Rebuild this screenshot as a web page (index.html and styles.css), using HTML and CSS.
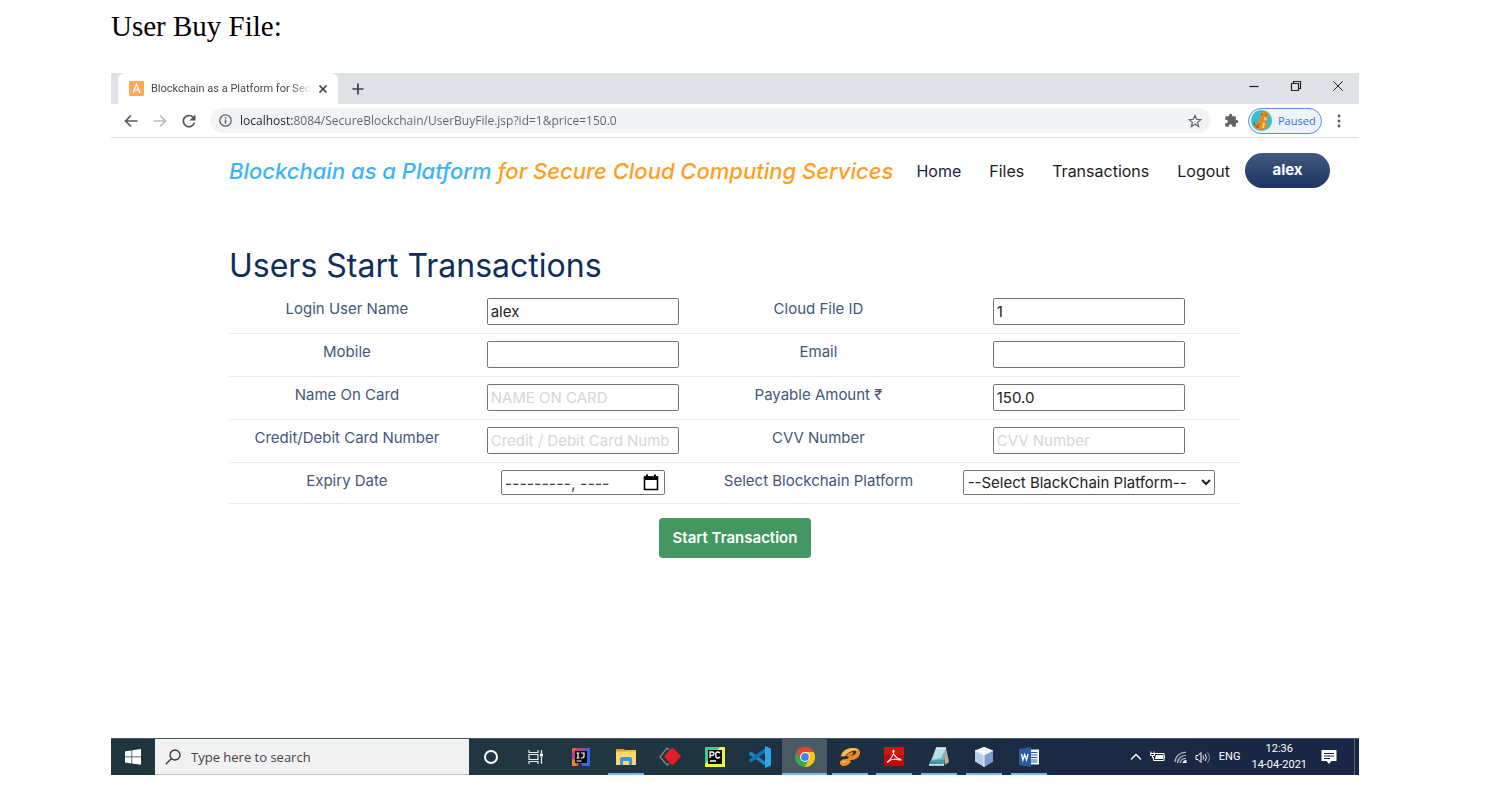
FILE: index.html
```html
<!DOCTYPE html>
<html lang="en">
<head>
<meta charset="utf-8">
<title>User Buy File</title>
<link rel="stylesheet" href="styles.css">
</head>
<body>
<h1 class="caption">User Buy File:</h1>
<div class="screen">
  <div class="tabstrip">
    <div class="tab">
      <svg class="favicon" viewBox="0 0 15 15" aria-hidden="true"><rect width="15" height="15" rx="1" fill="#fda95b"/><path d="M4 12 7.500 3.200 11 12M5.300 9h4.400" fill="none" stroke="#fff" stroke-width="1.200"/></svg>
      <span class="tab-title">Blockchain as a Platform for Secu</span>
      <button class="icon-btn" aria-label="Close tab"><svg width="10" height="10" viewBox="0 0 10 10"><path d="M1.500 1.500l7 7m0-7l-7 7" stroke="#3c4043" stroke-width="1.700"/></svg></button>
    </div>
    <button class="icon-btn new-tab" aria-label="New tab"><svg width="12" height="12" viewBox="0 0 12 12"><path d="M6 .5v11M.5 6h11" stroke="#3c4043" stroke-width="1.700"/></svg></button>
    <div class="window-controls">
      <button class="icon-btn" aria-label="Minimize"><svg width="12" height="12" viewBox="0 0 12 12"><path d="M1.500 6.500h9" stroke="#222" stroke-width="1.200"/></svg></button>
      <button class="icon-btn" aria-label="Restore"><svg width="12" height="12" viewBox="0 0 12 12"><path d="M1.500 3.500h7v7h-7zM3.500 3.500v-2h7v7h-2" fill="none" stroke="#222" stroke-width="1.200"/></svg></button>
      <button class="icon-btn" aria-label="Close"><svg width="12" height="12" viewBox="0 0 12 12"><path d="M1.300 1.300l9.400 9.400m0-9.400l-9.400 9.400" stroke="#222"/></svg></button>
    </div>
  </div>

  <div class="toolbar">
    <div class="history">
      <button class="icon-btn" aria-label="Back"><svg width="14" height="14" viewBox="0 0 14 14"><path d="M13.500 7H1.500M7 1.500 1.500 7 7 12.500" fill="none" stroke="#55595e" stroke-width="1.700"/></svg></button>
      <button class="icon-btn" aria-label="Forward"><svg width="14" height="14" viewBox="0 0 14 14"><path d="M.5 7h12M7 1.500 12.500 7 7 12.500" fill="none" stroke="#b9bbbe" stroke-width="1.700"/></svg></button>
      <button class="icon-btn" aria-label="Reload"><svg width="14" height="14" viewBox="0 0 14 14"><path d="M12.400 8.600A5.600 5.600 0 1 1 11 3.200" fill="none" stroke="#4f5358" stroke-width="1.700"/><path d="M13.500.5v6h-6z" fill="#4f5358"/></svg></button>
    </div>
    <div class="address">
      <svg width="13" height="13" viewBox="0 0 13 13" aria-hidden="true"><circle cx="6.500" cy="6.500" r="5.700" fill="none" stroke="#5f6368" stroke-width="1.300"/><path d="M6.500 5.500v4.300M6.500 3v1.500" stroke="#5f6368" stroke-width="1.500"/></svg>
      <input class="url" type="text" aria-label="Address" value="localhost:8084/SecureBlockchain/UserBuyFile.jsp?id=1&amp;price=150.0">
      <button class="icon-btn" aria-label="Bookmark"><svg width="14" height="14" viewBox="0 0 14 14"><path d="M7 1.500l1.600 3.800 4.200.4-3.200 2.700 1 4.100L7 10.300l-3.600 2.200 1-4.100-3.200-2.700 4.200-.4z" fill="none" stroke="#5f6368" stroke-width="1.200"/></svg></button>
    </div>
    <button class="icon-btn extensions" aria-label="Extensions"><svg width="15" height="15" viewBox="0 0 24 24"><path fill="#5f6368" d="M20.500 11H19V7a2 2 0 0 0-2-2h-4V3.500a2.500 2.500 0 0 0-5 0V5H4a2 2 0 0 0-2 2v3.800h1.500a2.700 2.700 0 0 1 0 5.400H2V20a2 2 0 0 0 2 2h3.800v-1.500a2.700 2.700 0 0 1 5.400 0V22H17a2 2 0 0 0 2-2v-4h1.500a2.500 2.500 0 0 0 0-5z"/></svg></button>
    <button class="profile">
      <svg width="21" height="21" viewBox="0 0 21 21" aria-hidden="true"><circle cx="10.500" cy="10.500" r="10.500" fill="#35bdd0"/><path d="M10 3q1-2 5-1 3 1 3 4l-2 3-2 1 3 4-1 4-4 2-6-1q-4-2-3-5l3 1q-1-4 4-6l-1-3z" fill="#e58a22"/><path d="M13 7l3 1-1 3-2-1zM12 12l2 1-1 5h-2z" fill="#f8cf79"/><path d="M3 12q0 4 3 5M10 4l2 1M14 5h2M8 14q-2 1-1 4" fill="none" stroke="#8c4318"/></svg>
      <span>Paused</span>
    </button>
    <button class="icon-btn menu" aria-label="Menu"><svg width="4" height="14" viewBox="0 0 4 14"><g fill="#55595e"><circle cx="2" cy="2" r="1.400"/><circle cx="2" cy="7" r="1.400"/><circle cx="2" cy="12" r="1.400"/></g></svg></button>
  </div>

  <div class="site">
    <header class="site-header">
      <a class="brand" href="#">Blockchain as a Platform <span class="brand-accent">for Secure Cloud Computing Services</span></a>
      <nav class="nav">
        <a class="current" href="#">Home</a>
        <a href="#">Files</a>
        <a href="#">Transactions</a>
        <a href="#">Logout</a>
        <a class="user-pill" href="#">alex</a>
      </nav>
    </header>
    <main class="content">
      <h2 class="title">Users Start Transactions</h2>
      <form>
        <table class="form-table">
          <colgroup><col class="col"><col class="col"><col class="col"><col class="col-wide"></colgroup>
          <tbody>
            <tr>
              <td><label for="user">Login User Name</label></td>
              <td><input class="field" id="user" type="text" value="alex"></td>
              <td><label for="file">Cloud File ID</label></td>
              <td><input class="field" id="file" type="text" value="1"></td>
            </tr>
            <tr>
              <td><label for="mobile">Mobile</label></td>
              <td><input class="field" id="mobile" type="text"></td>
              <td><label for="email">Email</label></td>
              <td><input class="field" id="email" type="email"></td>
            </tr>
            <tr>
              <td><label for="name">Name On Card</label></td>
              <td><input class="field" id="name" type="text" placeholder="NAME ON CARD"></td>
              <td><label for="amount">Payable Amount ₹</label></td>
              <td><input class="field" id="amount" type="text" value="150.0"></td>
            </tr>
            <tr>
              <td><label for="card">Credit/Debit Card Number</label></td>
              <td><input class="field" id="card" type="text" placeholder="Credit / Debit Card Numb"></td>
              <td><label for="cvv">CVV Number</label></td>
              <td><input class="field" id="cvv" type="text" placeholder="CVV Number"></td>
            </tr>
            <tr>
              <td><label for="expiry">Expiry Date</label></td>
              <td>
                <div class="month">
                  <input id="expiry" type="text" placeholder="---------, ----">
                  <button class="icon-btn" type="button" aria-label="Show month picker"><svg width="16" height="17" viewBox="0 0 16 17"><path d="M1.500 3h13v12.500h-13z" fill="none" stroke="#000" stroke-width="1.600"/><path d="M1 2.500h14V6H1zM3 .5h2v3H3zM11 .5h2v3h-2z"/></svg></button>
                </div>
              </td>
              <td><label for="platform">Select Blockchain Platform</label></td>
              <td><select class="platform" id="platform"><option>--Select BlackChain Platform--</option></select></td>
            </tr>
          </tbody>
        </table>
        <button class="submit" type="submit">Start Transaction</button>
      </form>
    </main>
  </div>

  <div class="taskbar">
    <button class="start" aria-label="Start"><svg width="16" height="16" viewBox="0 0 16 16"><path fill="#fff" d="M0 2.300l6.500-.9v6.100H0zM7.200 1.300 16 0v7.500H7.200zM0 8.300h6.500v6.100L0 13.500zM7.200 8.300H16v7.500l-8.800-1.200z"/></svg></button>
    <div class="search">
      <svg width="16" height="16" viewBox="0 0 16 16" aria-hidden="true"><circle cx="10" cy="6" r="5" fill="none" stroke="#333" stroke-width="1.300"/><path d="M6.500 9.500.8 15.200" stroke="#333" stroke-width="1.300"/></svg>
      <input type="text" aria-label="Search" placeholder="Type here to search">
    </div>
    <div class="apps">
      <button class="app" aria-label="Cortana"><svg width="20" height="20" viewBox="0 0 20 20"><circle cx="10" cy="10" r="6" fill="none" stroke="#fff" stroke-width="2"/></svg></button>
      <button class="app" aria-label="Task view"><svg width="20" height="20" viewBox="0 0 20 20"><path d="M3 3v2.500h9V3M3 17v-2.500h9V17M3 7.500h9v5H3zM15.500 3v3.500M15.500 10v7" fill="none" stroke="#e8ecee" stroke-width="1.200"/><path d="M14 6.500h3v3h-3z" fill="#fff"/></svg></button>
      <button class="app" aria-label="IntelliJ IDEA"><svg width="20" height="20" viewBox="0 0 20 20"><path d="M1 1h9L7 19H1z" fill="#f05a3c"/><path d="M6 1h13v18h-8z" fill="#3564e8"/><path d="M1 6l6-5h7L5 19H1z" fill="#c13c87"/><path d="M1 12l4 1v6H1z" fill="#f38230"/><path d="M4 4h12v12H4z" fill="#090909"/><path d="M5.500 6h3M7 6v5M5.500 11h3M10 6h3v3.500q0 1.500-2 1.500h-1M5.500 14h5" fill="none" stroke="#fff" stroke-width="1.200"/></svg></button>
      <button class="app running" aria-label="File Explorer"><svg width="20" height="20" viewBox="0 0 20 20"><path d="M0 2h8l2 2H0z" fill="#e59b1c"/><path d="M0 4h20v14H0z" fill="#ffd76a"/><path d="M0 4h9l1-1h10v2H0z" fill="#f6bd3c"/><path d="M4 18v-7l2-1h8l2 1v7h-3v-4H7v4z" fill="#3b96de"/></svg></button>
      <button class="app" aria-label="Git client"><svg width="22" height="20" viewBox="0 0 22 20"><path d="M10 2.500 8 1 1 10l7 8 2-1.500" fill="none" stroke="#87949a" stroke-width="1.200"/><path d="M13.500 1q.8 0 1.500.7l6.500 7q.7.800 0 1.600L15 17.300q-1.500 1.400-3 0l-6.500-7q-.7-.8 0-1.600L12 1.700q.7-.7 1.500-.7z" fill="#e01f28"/></svg></button>
      <button class="app" aria-label="PyCharm"><svg width="20" height="20" viewBox="0 0 20 20"><path d="M0 0h20v20H0z" fill="#f6f04a"/><path d="M0 0h15L0 17z" fill="#32d58c"/><path d="M3 3h14v14H3z" fill="#080808"/><path d="M5 11V5h2q2 0 2 1.700T7 8.500H5M15 6q-1-1-2.300-1-2 0-2 3t2 3q1.300 0 2.300-1M5 14h6" fill="none" stroke="#fff" stroke-width="1.300"/></svg></button>
      <button class="app" aria-label="Visual Studio Code"><svg width="22" height="22" viewBox="0 0 22 22"><path d="M0 7l2-1.500L18 17v4L0 8.500z" fill="#1686cb"/><path d="M0 15l2 1.500L18 5V1L0 13.500z" fill="#0877b9"/><path d="M16 0l6 2.500v17L16 22z" fill="#2aa5ee"/></svg></button>
      <button class="app running active" aria-label="Chrome"><svg width="20" height="20" viewBox="0 0 20 20"><circle cx="10" cy="10" r="10" fill="#38a853"/><path d="M1.300 5A10 10 0 0 1 18.700 5L10 5.500 5.700 12.500z" fill="#e94335"/><path d="M18.700 5A10 10 0 0 1 9.500 20l4.800-7.500L10 5z" fill="#fbc116"/><circle cx="10" cy="10" r="4.900" fill="#fff"/><circle cx="10" cy="10" r="3.900" fill="#4285e8"/></svg></button>
      <button class="app running" aria-label="Media player"><svg width="20" height="20" viewBox="0 0 20 20"><path fill-rule="evenodd" d="M1 9Q3 1 13 1q8 0 7 6-2 6-10 6l1 2q-3 4-8 4-4-1-3-4 1-3 6-3 2 0 3-2l-3-1q2-3 6-4 2 0 1 2-1 1-3 2 4 0 6-3 1-3-3-2-7 1-8 5-2 1-5 0z" fill="#f58a22"/><path d="M1 9Q4 1 13 1q4 0 6 2-6-1-12 4l-2 2zM1 15q2-2 6-1l-3 2z" fill="#ffbc55"/></svg></button>
      <button class="app running" aria-label="Adobe Reader"><svg width="20" height="20" viewBox="0 0 20 20"><path d="M0 0h20v19H0z" fill="#bd0909"/><path d="M0 0h20v8H0z" fill="#d31410"/><path d="M3 15.500q6-5 7-11.500-.5-1.500-1 0 0 4.500 5 7.500 3 .5 3 1.500-4 0-6-1-4 0-8 3.500z" fill="none" stroke="#fff" stroke-width="1.200"/></svg></button>
      <button class="app running" aria-label="Notepad"><svg width="22" height="20" viewBox="0 0 22 20"><path d="M16 1h2l3 14-4 3z" fill="#bcae8e"/><path d="M8 1h10l-2 17H1z" fill="#68b8c4"/><path d="M8 1h10l-5 10-9 2z" fill="#b5dfe3"/><path d="M1 18l1.500-4L16 13l-1 5z" fill="#3f94a5"/><path d="M1 18h15M8 1h10" stroke="#e5f4f4" stroke-width="1.500"/></svg></button>
      <button class="app running" aria-label="NetBeans"><svg width="20" height="22" viewBox="0 0 20 22"><path d="M10 1l9 3.500v11L10 21l-9-5.500v-11z" fill="#b8cced"/><path d="M10 1l9 3.500L10 9 1 4.500z" fill="#f3f6ef"/><path d="M10 9l9-4.500v11L10 21z" fill="#7d9bcf"/><path d="M10 9v12M1 4.500 10 9l9-4.500" fill="none" stroke="#eef4ff"/></svg></button>
      <button class="app running" aria-label="Word"><svg width="20" height="20" viewBox="0 0 20 20"><path d="M11 2.500h9v15h-9z" fill="#fff"/><path d="M12 5.500h6.500M12 8h6.500M12 10.500h6.500M12 13h6.500M12 15h6.500" stroke="#2b5ca8"/><path d="M0 2l12-2v20L0 18z" fill="#2b5aa6"/><path d="M2.500 7l1.400 6 1.800-5.500L7.500 13 9 7" fill="none" stroke="#fff" stroke-width="1.300"/></svg></button>
    </div>
    <div class="tray">
      <svg width="12" height="8" viewBox="0 0 12 8" aria-hidden="true"><path d="M1 6.500 6 1.500l5 5" fill="none" stroke="#fff" stroke-width="1.300"/></svg>
      <svg width="16" height="12" viewBox="0 0 16 12" aria-hidden="true"><path d="M5 2.500h9v7H3.500V6M14.500 4.500v3M1 .5v2M4 .5v2M.5 2.500h4v2h-4zM2.500 4v3" fill="none" stroke="#fff"/><path d="M6 4h7v4H5z" fill="#fff"/></svg>
      <svg width="13" height="13" viewBox="0 0 13 13" aria-hidden="true"><path d="M1 11A10 10 0 0 1 12 1.500M3.500 12A8 8 0 0 1 12 4.500M6 12a6 6 0 0 1 6-4.500" fill="none" stroke="#b9c0cd" stroke-width="1.200"/><path d="M8.500 12a4 4 0 0 1 4-3v3z" fill="#fff"/></svg>
      <svg width="16" height="13" viewBox="0 0 16 13" aria-hidden="true"><path d="M1 4.500h2L6 1.500v10l-3-3H1z" fill="none" stroke="#fff"/><path d="M8 4.500q1.500 2 0 4M10 3q3 3.500 0 7" fill="none" stroke="#fff"/><path d="M12.500 1.500q4 5 0 10" fill="none" stroke="#8993a6"/></svg>
      <span class="lang">ENG</span>
      <div class="clock"><span>12:36</span><span>14-04-2021</span></div>
      <button class="icon-btn" aria-label="Notifications"><svg width="16" height="16" viewBox="0 0 16 16"><path d="M.5 1h15v11h-5L8 15l-2.500-3h-5z" fill="#fff"/><path d="M3 4.500h10M3 7h10M3 9.500h6" stroke="#1a2745"/></svg></button>
    </div>
    <button class="show-desktop" aria-label="Show desktop"></button>
  </div>
</div>
</body>
</html>
```

FILE: styles.css
```css
* { box-sizing: border-box; }

body {
  margin: 0;
  min-height: 100vh;
  display: flex;
  flex-direction: column;
  padding: 8px 133px 32px 111px;
  background: #fff;
  font-family: "Open Sans", "Noto Sans", sans-serif;
}

button, input, select { font: inherit; color: inherit; }
a { color: inherit; text-decoration: none; }
svg { display: block; flex: none; }

.caption {
  margin: 0 0 29px;
  font: 400 29px/36px "Liberation Serif", serif;
  color: #000;
}

.screen { flex: 1; display: flex; flex-direction: column; }

.icon-btn {
  display: flex;
  align-items: center;
  justify-content: center;
  padding: 0;
  border: 0;
  background: none;
}

/* Browser chrome */
.tabstrip {
  display: flex;
  align-items: center;
  height: 31px;
  padding-left: 7px;
  background: #dee1e6;
}

.tab {
  display: flex;
  align-items: center;
  width: 220px;
  height: 31px;
  padding: 0 10px 0 11px;
  gap: 7px;
  border-radius: 7px 7px 0 0;
  background: #fff;
  font-family: Roboto, sans-serif;
  font-size: 11px;
  color: #45494d;
}

.favicon { width: 15px; height: 15px; }

.tab-title {
  flex: 1;
  min-width: 0;
  white-space: nowrap;
  mask-image: linear-gradient(90deg, #000 88%, transparent);
}

.new-tab { margin-left: 14px; }

.window-controls {
  display: flex;
  gap: 30px;
  margin: 0 15px 5px auto;
}

.toolbar {
  display: flex;
  align-items: center;
  height: 34px;
  padding: 0 18px 0 13px;
  border-bottom: 1px solid #dcdee0;
  font-size: 12px;
}

.history { display: flex; gap: 15px; }

.address {
  flex: 1;
  display: flex;
  align-items: center;
  gap: 8px;
  height: 25px;
  margin-left: 14px;
  padding: 0 9px;
  border-radius: 13px;
  background: #f1f3f4;
}

/* The host is darker than the path that follows it. */
.url {
  flex: 1;
  min-width: 0;
  padding: 0;
  border: 0;
  background: linear-gradient(90deg, #202124 54px, #5f6368 54px);
  background-clip: text;
  -webkit-text-fill-color: transparent;
  color: #5f6368;
}

.extensions { margin-left: 13px; }

.profile {
  display: flex;
  align-items: center;
  gap: 6px;
  width: 74px;
  height: 26px;
  margin-left: 9px;
  padding: 0 2px;
  border: 1px solid #5b8fe0;
  border-radius: 13px;
  background: #edf2fc;
  font-size: 11px;
  color: #3f6fd1;
}

.menu { margin-left: 15px; }

/* Web site */
.site {
  flex: 1;
  font-family: Inter, "Open Sans", sans-serif;
  font-size: 15px;
  line-height: 24px;
}

.site-header {
  display: flex;
  align-items: center;
  justify-content: space-between;
  height: 65px;
  padding: 0 29px 0 118px;
}

.brand {
  font-size: 22px;
  font-style: italic;
  font-weight: 500;
  color: #3db5f5;
  white-space: nowrap;
}

.brand-accent { color: #ff9e1f; }

.nav { display: flex; align-items: center; gap: 2px; color: #1c1c1c; }
.nav a { padding: 0 13px; }
.nav a:not(.user-pill) { font-size: 16px; }
.nav .current { color: #2c2044; }

.nav .user-pill {
  width: 85px;
  padding: 5px 0 6px;
  border-radius: 18px;
  background: linear-gradient(#425a80, #1b3461);
  color: #fff;
  font-weight: 700;
  text-align: center;
}

.content { padding: 43px 118px 0; }

.title {
  margin: 0 0 5px;
  font-size: 32px;
  line-height: 40px;
  font-weight: 400;
  color: #102e5a;
}

.form-table {
  width: 100%;
  border-collapse: collapse;
  table-layout: fixed;
  text-align: center;
}

.col { width: 23.3%; }
.col-wide { width: 30.1%; }

.form-table td {
  padding: 7px 0 8px;
  border-bottom: 1px solid #ececee;
  vertical-align: top;
  color: #435779;
}

.form-table label { display: block; line-height: 22px; }

.field, .month, .platform {
  display: block;
  margin: 0 auto;
  border: 1px solid #767676;
  border-radius: 2px;
  background: #fff;
  color: #222;
}

.field { width: 192px; height: 27px; padding: 0 3px; }
.field::placeholder { color: #d5d6d9; }
.platform { width: 252px; height: 25px; padding: 0; }

.month {
  display: flex;
  align-items: center;
  width: 164px;
  height: 25px;
  padding: 0 5px 0 3px;
}

.month input {
  flex: 1;
  min-width: 0;
  padding: 0;
  border: 0;
  background: none;
  font-size: 16px;
}
.month input::placeholder { color: #444; }

.submit {
  display: block;
  margin: 14px auto 0;
  padding: 8px 14px;
  border: 0;
  border-radius: 4px;
  background: #429860;
  color: #fff;
  font-weight: 600;
}

/* Taskbar */
.taskbar {
  display: flex;
  height: 37px;
  background: linear-gradient(90deg, #20363f, #203641 40%, #1b2a43 75%, #192646);
  border-top: 1px solid #4a5a64;
  color: #fff;
}

.start {
  display: flex;
  align-items: center;
  justify-content: center;
  width: 44px;
  padding: 0;
  border: 0;
  background: none;
}

.search {
  display: flex;
  align-items: center;
  gap: 10px;
  width: 314px;
  padding-left: 10px;
  border-bottom: 1px solid #c4c4c4;
  background: #f1f1f1;
  font-size: 13px;
}

.search input {
  flex: 1;
  min-width: 0;
  padding: 0;
  border: 0;
  background: none;
}
.search input::placeholder { color: #444; }

.apps { display: flex; width: 582px; }

.app {
  flex: 1;
  display: flex;
  align-items: center;
  justify-content: center;
  padding: 0;
  border: 0;
  background: none;
}

.running {
  background: linear-gradient(#76b9ed, #76b9ed) center bottom / 36px 2px no-repeat;
}

.active {
  background: linear-gradient(#76b9ed, #76b9ed) center bottom / 100% 2px no-repeat, #4a5a65;
}

.tray {
  display: flex;
  align-items: center;
  gap: 8px;
  margin-left: auto;
  padding-right: 17px;
  font-family: Roboto, sans-serif;
  font-size: 11px;
  line-height: 16px;
}

.clock {
  display: flex;
  flex-direction: column;
  align-items: center;
  margin: 0 6px 0 3px;
}

.show-desktop {
  width: 5px;
  padding: 0;
  border: 0;
  border-left: 1px solid #5a6680;
  background: none;
}
```
